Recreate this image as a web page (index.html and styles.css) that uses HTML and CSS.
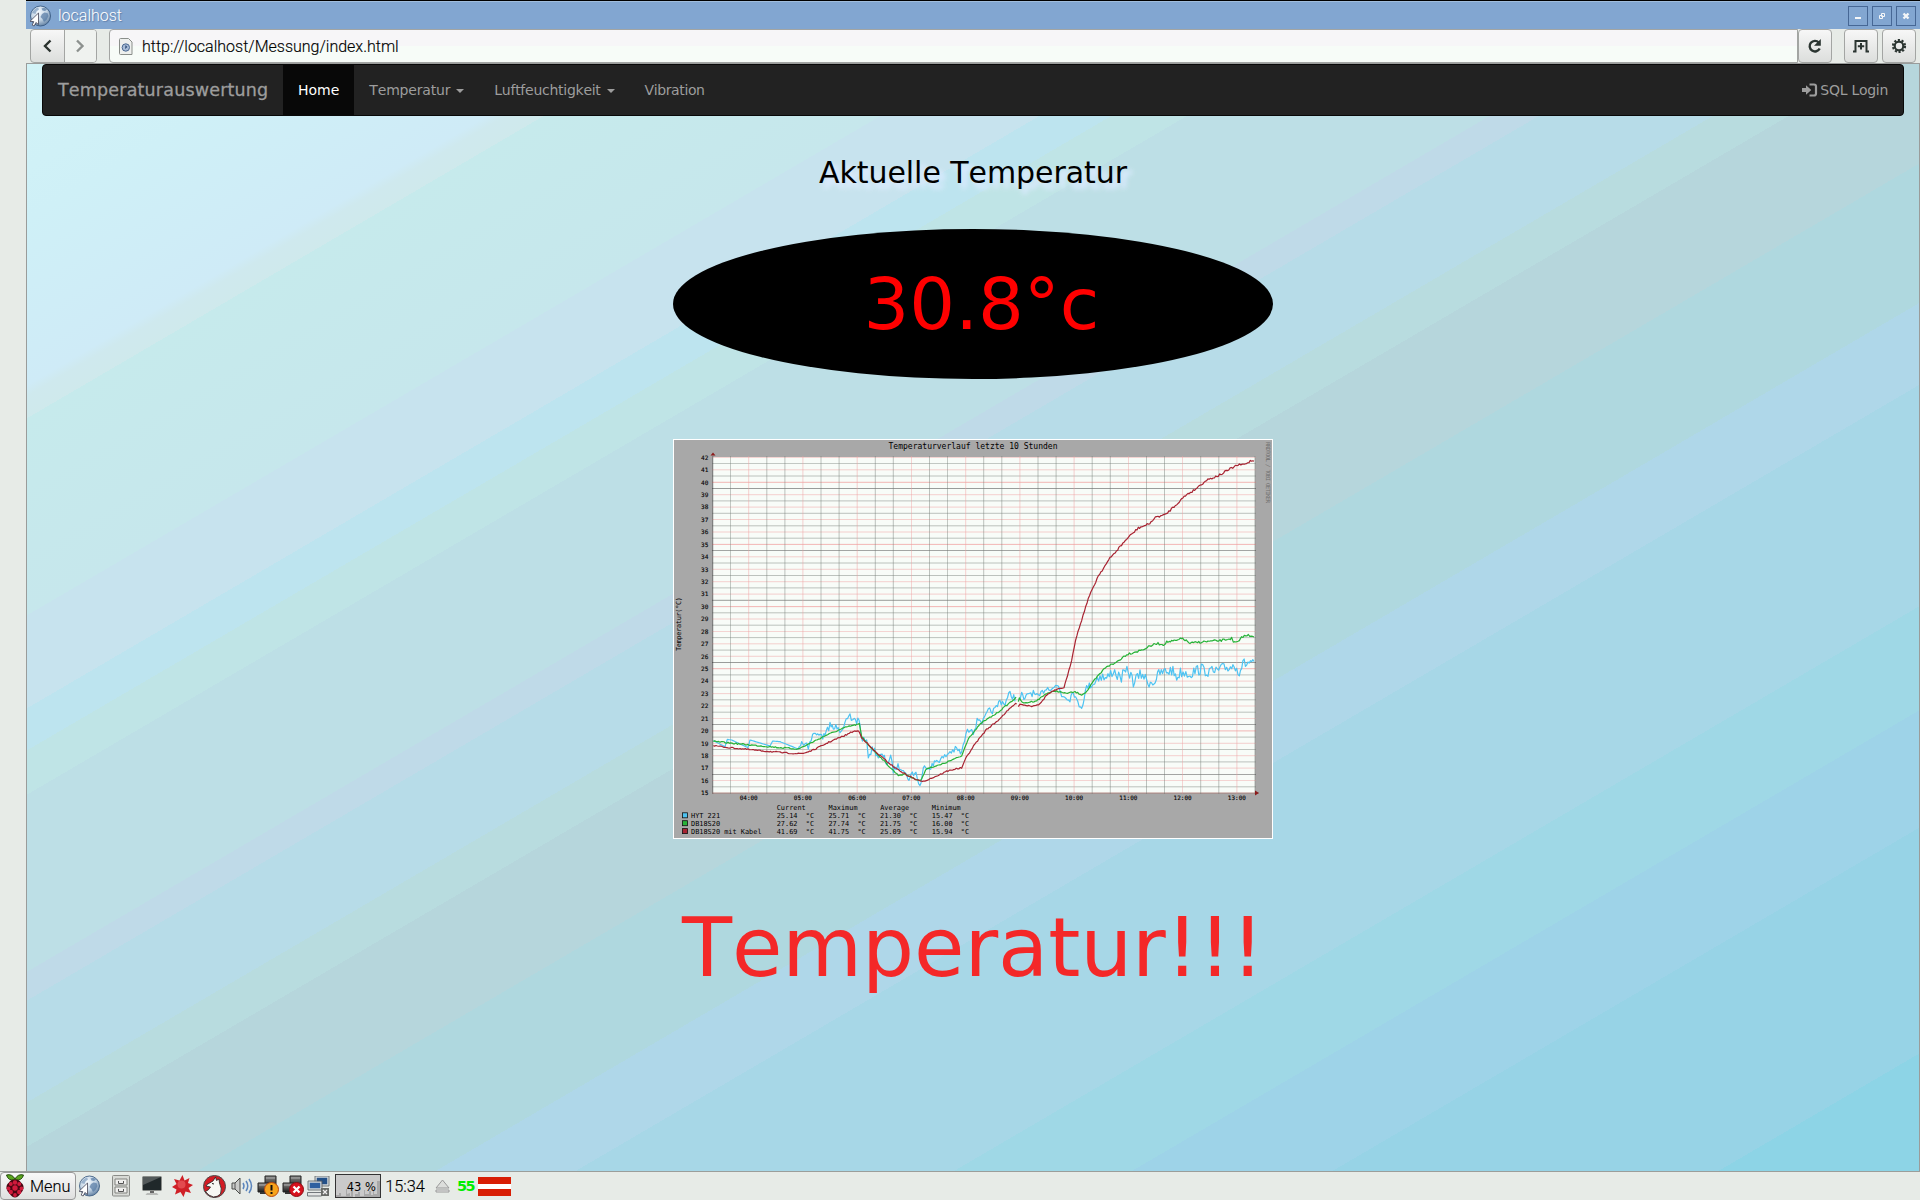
FILE: index.html
```html
<!DOCTYPE html>
<html lang="de">
<head>
<meta charset="utf-8">
<title>localhost</title>
<link rel="stylesheet" href="styles.css">
</head>
<body>
<svg class="defs" width="0" height="0">
  <defs>
    <radialGradient id="ball" cx=".4" cy=".3" r=".8"><stop offset="0" stop-color="#f4f9fd"/><stop offset=".5" stop-color="#c4d5e5"/><stop offset="1" stop-color="#4a6c92"/></radialGradient>
    <linearGradient id="metal" x2="0" y2="1"><stop offset="0" stop-color="#8a8a88"/><stop offset="1" stop-color="#1c1c1c"/></linearGradient>
    <symbol id="globe" viewBox="0 0 22 22">
      <circle cx="11.500" cy="11" r="10" fill="url(#ball)" stroke="#2f5078" stroke-width=".8"/>
      <path d="M12.500 3.500l3-1 2.500 2-2 1.500-2.500-.5zM13 9l2.500-1.500 3 .5 1 3-2 4-2.500 2-1.500-3-2-2z" fill="#49709c" opacity=".65"/>
      <path d="M3 8q2-4.500 6-5.500l1 2-2.500 2-1 2.500z" fill="#6f91b6" opacity=".6"/>
      <path d="M9.500 8v11.500l-2.600-2-1.700 3.500-2-.9 1.600-3.500-3.800-.3z" fill="#fff" stroke="#445" stroke-width=".8"/>
    </symbol>
    <symbol id="cards" viewBox="0 0 22 22">
      <path d="M8 1h11v11H8z" fill="url(#metal)" stroke="#222"/><path d="M1 8h11v9H1z" fill="url(#metal)" stroke="#222"/>
      <path d="M9 3h9M2 10h9" stroke="#aaa"/><path d="M3 18h9M12 13h6" stroke="#333" stroke-width="2"/>
    </symbol>
  </defs>
</svg>
<div class="desktop">
  <main class="window">
    <header class="titlebar">
      <svg class="title-icon"><use href="#globe"/></svg>
      <span class="title">localhost</span>
      <div class="win-buttons">
        <svg viewBox="0 0 18 18"><path d="M6 10h6v2H6z" fill="#f4f6f8"/></svg>
        <svg viewBox="0 0 18 18"><path d="M8.500 6.500h3v3h-3zM6.500 8.500h3v3h-3z" fill="none" stroke="#f4f6f8"/></svg>
        <svg viewBox="0 0 18 18"><path d="M6.500 6.500l5 5M11.500 6.500l-5 5" stroke="#f4f6f8" stroke-width="2.400"/></svg>
      </div>
    </header>
    <div class="toolbar">
      <div class="nav-pair">
        <svg viewBox="0 0 33 32"><path d="M19.500 10.500l-5.500 5.500 5.500 5.500" fill="none" stroke="#2b332f" stroke-width="2.400"/></svg>
        <svg class="off" viewBox="0 0 31 32"><path d="M12 10.500l5.500 5.500-5.500 5.500" fill="none" stroke="#8c918e" stroke-width="2.400"/></svg>
      </div>
      <div class="address">
        <svg width="14" height="17" viewBox="0 0 14 17"><path d="M1.500.5h8l3.500 3.500v12.500H1.500q-1 0-1-1v-14q0-1 1-1z" fill="#eef0ee" stroke="#8a8e8a"/><circle cx="6.800" cy="9.500" r="3.700" fill="#a9bdd8" stroke="#4a6890"/><path d="M6.500 7l2 2-2.500 2z" fill="#36547e"/></svg>
        <span>http://localhost/Messung/index.html</span>
      </div>
      <svg class="tool" viewBox="0 0 32 32"><path d="M19.800 12.500a5.300 5.300 0 1 0 .9 6" fill="none" stroke="#2b3531" stroke-width="2.400"/><path d="M21.800 9v6.800H15z" fill="#2b3531"/></svg>
      <svg class="tool tab" viewBox="0 0 32 32"><path d="M8 21.500h2.500V11h11v10.500H24" fill="none" stroke="#2b3531" stroke-width="2"/><path d="M16 13v6.500M12.800 16.200h6.400" stroke="#2b3531" stroke-width="2"/></svg>
      <svg class="tool gear" viewBox="0 0 32 32"><circle cx="16" cy="16" r="4.300" fill="none" stroke="#2b3531" stroke-width="2.200"/><circle cx="16" cy="16" r="6" fill="none" stroke="#2b3531" stroke-width="2.200" stroke-dasharray="2.100 1.670"/></svg>
    </div>
    <section class="page">
      <nav class="navbar">
        <a class="brand">Temperaturauswertung</a>
        <a class="item active">Home</a>
        <a class="item temperature">Temperatur<i class="caret"></i></a>
        <a class="item humidity">Luftfeuchtigkeit<i class="caret"></i></a>
        <a class="item vibration">Vibration</a>
        <a class="item login"><svg width="16" height="14" viewBox="0 0 16 14"><path d="M0 5h4V2.200L9.300 7 4 11.800V9H0z" fill="#9d9d9d"/><path d="M7.500 1.500H12q2 0 2 2v7q0 2-2 2H7.500" fill="none" stroke="#9d9d9d" stroke-width="2.200"/></svg>SQL Login</a>
      </nav>
      <h1>Aktuelle Temperatur</h1>
      <div class="reading">30.8°c</div>
      <svg class="chart" id="chart" viewBox="0 0 600 400"></svg>
      <p class="alarm">Temperatur!!!</p>
    </section>
  </main>
  <footer class="taskbar">
    <div class="menu">
      <svg width="20" height="24" viewBox="0 0 20 24"><path d="M10 6Q3 7 1.500 1 7-.5 10 5q3-5.500 8.500-4Q17 7 10 6z" fill="#5aa51e" stroke="#234a0c"/><path d="M10 5.500q4-.5 6 3 3 2 2.500 6-.5 3-3 5Q13 23.500 10 23.500T4.500 19.500q-2.500-2-3-5-.5-4 2.500-6 2-3.500 6-3z" fill="#4a0612"/><g fill="#d01a3c"><circle cx="10" cy="8.500" r="2.200"/><circle cx="5.800" cy="10" r="2"/><circle cx="14.200" cy="10" r="2"/><circle cx="10" cy="14" r="2.700"/><circle cx="3.500" cy="14.500" r="1.900"/><circle cx="16.500" cy="14.500" r="1.900"/><circle cx="5.800" cy="18" r="2.200"/><circle cx="14.200" cy="18" r="2.200"/><circle cx="10" cy="21" r="1.900"/></g></svg>
      <span>Menu</span>
    </div>
    <svg width="22" height="22"><use href="#globe"/></svg>
    <svg width="18" height="22" viewBox="0 0 18 22"><rect x=".5" y=".5" width="17" height="20.500" rx="1" fill="#d8dad6" stroke="#8a8c88"/><path d="M3 4h12v6H3zM3 12h12v6H3z" fill="#efefed" stroke="#81837f"/><path d="M6.500 6v2.500h5V6M6.500 14v2.500h5V14" fill="none" stroke="#555"/></svg>
    <svg width="20" height="20" viewBox="0 0 20 20"><rect x=".5" y=".5" width="19" height="14" rx="1" fill="#20282a" stroke="#8a8d8a"/><path d="M1 1h18L1 9z" fill="#53595a"/><path d="M8 15h4v2H8z" fill="#666"/><path d="M5 17h10l1.500 2h-13z" fill="#b8bab8"/></svg>
    <svg width="21" height="22" viewBox="0 0 21 22"><path d="M10.500 0l2 5.500 5-2.500-1.500 5 5 2-4.500 3 2.500 5-5.500-1.500-2 5.500-3-5L3 19.500l1.500-5L0 12l4.500-3L2 4l5.500 1.500z" fill="#cf2027"/><circle cx="9.500" cy="9.500" r="4" fill="#f0686a" opacity=".6"/></svg>
    <svg width="23" height="23" viewBox="0 0 23 23"><circle cx="11.500" cy="11.500" r="11" fill="#d31c24" stroke="#4b4b4b"/><path d="M2.500 16.500Q6 15 7.500 12L3 11l1-1.500 6-3.500L12.500 2l1 3.500L16 4l.5 4q3 6 1 11-3 3-7 3-5-1-8-5.500z" fill="#f7f7f4" stroke="#222" stroke-width=".8"/><path d="M9 8.500l2 .5" stroke="#222"/></svg>
    <svg width="22" height="20" viewBox="0 0 22 20"><path d="M1 7h3l5-5v16l-5-5H1z" fill="#c9cbc9" stroke="#4a4c4a"/><path d="M4 7v6" stroke="#555"/><g fill="none" stroke="#5c86bd" stroke-width="1.500"><path d="M12 7q2 3 0 6"/><path d="M15 5q3.500 5 0 10"/><path d="M18 3q5 7 0 14"/></g></svg>
    <svg width="22" height="22" viewBox="0 0 22 22"><use href="#cards"/><circle cx="14.500" cy="14.500" r="7" fill="#f6a31c" stroke="#b9480e"/><path d="M14.500 10v5.500M14.500 17v2" stroke="#111" stroke-width="2"/></svg>
    <svg width="22" height="22" viewBox="0 0 22 22"><use href="#cards"/><circle cx="14.500" cy="14.500" r="7" fill="#d8121d" stroke="#8c0c12"/><path d="M11.500 11.500l6 6M17.500 11.500l-6 6" stroke="#fff" stroke-width="2.300"/></svg>
    <svg class="hosts" width="23" height="21" viewBox="0 0 23 21"><path d="M9 1h12v8H9z" fill="#235088" stroke="#d4d8da" stroke-width="1.500"/><path d="M8 0h14v10H8z" fill="none" stroke="#555b60" stroke-width=".8"/><path d="M2 6h12v7H2z" fill="#2f60a0" stroke="#d4d8da" stroke-width="1.500"/><path d="M1 5h14v9H1z" fill="none" stroke="#555b60" stroke-width=".8"/><path d="M.5 16.500h14v3.500H.5z" fill="#e3e5e3" stroke="#555b60" stroke-width=".8"/><path d="M14 12h8v8h-8z" fill="#686b68"/><path d="M16 14l4 4M20 14l-4 4" stroke="#eee" stroke-width="1.300"/></svg>
    <div class="cpu">
      <svg viewBox="0 0 44 22"><path d="M0 22v-2h3v-2h2v3h5v-7h1v5l3-1v3h1v-5h2v6h2v-3h3v-2h2v4h4v-6h1v4h4v-3h2v4h2v-5h1v4h3V6h3v16z" fill="#a8a8a8"/></svg>
      <span>43 %</span>
    </div>
    <span class="clock">15:34</span>
    <svg class="eject" width="15" height="14" viewBox="0 0 15 14"><path d="M7.500 1L14 9H1z" fill="#dcdedb" stroke="#999"/><path d="M1 11h13v2H1z" fill="#eee" stroke="#999"/></svg>
    <span class="temp">55</span>
    <span class="flag"></span>
  </footer>
</div>
<script src="chart.js"></script>
</body>
</html>
```
FILE: styles.css
```css
* { box-sizing: border-box; }
body { margin: 0; background: #e7ebe7; font-family: "DejaVu Sans", sans-serif; font-kerning: none; overflow: hidden; }
.defs { display: block; }
.desktop { display: flex; flex-direction: column; height: 1200px; }
.window { margin-left: 26px; height: 1171px; flex: none; display: flex; flex-direction: column; border-top: 1px solid #000; }

.titlebar { height: 28px; flex: none; display: flex; align-items: center; padding: 0 4px 0 3px; background: #82a6d1; border-top: 1px solid #a0bddd; }
.title-icon { width: 22px; height: 22px; }
.title { margin: 0 auto 0 7px; font: 300 16px Roboto, sans-serif; color: #fff; text-shadow: 1px 1px 1px #607fa8; }
.win-buttons { display: flex; gap: 4px; }
.win-buttons svg { width: 20px; height: 20px; border: 1px solid #466795; }

.toolbar { height: 34px; flex: none; display: flex; padding: 0 4px; background: #e7ebe7; }
.nav-pair { display: flex; width: 67px; border: 1px solid #a3a5a3; border-radius: 4px; background: linear-gradient(#f7f7f7, #dcdedc); }
.nav-pair svg { width: 33px; height: 32px; }
.nav-pair .off { width: 32px; background: #eff2ef; border-left: 1px solid #a3a5a3; border-radius: 0 3px 3px 0; }
.address { flex: 1; display: flex; align-items: center; gap: 9px; margin-left: 12px; padding-left: 9px; border: 1px solid #a3a5a3; border-radius: 4px 0 0 4px; background: linear-gradient(#f7f6f8 50%, #f7fcf8 50%); font: 300 16px Roboto, sans-serif; color: #000; }
.address span { -webkit-text-stroke: .15px #000; }
.tool { width: 34px; height: 34px; border: 1px solid #a3a5a3; border-radius: 4px; background: linear-gradient(#f7f7f7, #dcdedc); }
.tab { margin-left: 12px; }
.gear { margin-left: 4px; }

.page {
  flex: 1; min-height: 0; display: flex; flex-direction: column; align-items: center;
  border: 1px solid #9a9c9b; border-bottom: 0; padding: 0 15px;
  background: linear-gradient(to bottom right,
    #d2f3f7 0, #cff0f7 7%, #cfebf7 14.500%, #cfe9ee 15%, #cfe9ec 16%,
    #c6eaec 16%, #c6e7ec 24.900%, #c7e3ee 24.900%, #c7e3ee 29.100%, #bde4ef 29.100%, #bde4ef 31%,
    #bfe4e6 31%, #bfe4e6 33%, #bddfe6 33%, #bddfe6 41%, #bfdae8 41%, #bfdae8 42.300%,
    #b7dce8 42.300%, #b7dce8 46.900%, #b8dcdf 46.900%, #b8dcdf 48.900%, #b6d6dc 48.900%, #b6d6dc 54.500%,
    #afd8df 54.500%, #afd8df 60.800%, #afd7e9 60.800%, #afd7e9 64.500%, #a7d7e7 64.500%, #a7d7e7 74.500%,
    #9fd8e6 74.500%, #9fd8e6 79.200%, #9ed3e8 79.200%, #9ed3e8 84.500%, #97d3e6 84.500%, #97d3e6 94.700%, #8dd4e6 94.700%);
}
.navbar { align-self: stretch; flex: none; display: flex; height: 52px; background: #222; border: 1px solid #080808; border-radius: 4px; color: #9d9d9d; font-size: 14px; line-height: 50px; }
.brand { padding: 0 15px; font-size: 17.500px; letter-spacing: .18px; -webkit-text-stroke: .3px #9d9d9d; width: 240px; white-space: nowrap; }
.item { padding: 0 15px; }
.active { background: #080808; color: #fff; }
.temperature { letter-spacing: -.18px; }
.humidity { letter-spacing: -.26px; }
.vibration { letter-spacing: -.4px; }
.caret { display: inline-block; margin-left: 6px; vertical-align: middle; border: 4px solid transparent; border-top-color: #9d9d9d; border-bottom: 0; }
.login { margin-left: auto; white-space: nowrap; letter-spacing: -.28px; }
.login svg { vertical-align: -2px; margin-right: 2px; }

h1 { margin: 39px 0 0; font-weight: 400; font-size: 30px; letter-spacing: -.06px; line-height: 35px; color: #000; text-shadow: 5px 5px 5px #dcebff, 4px 5px 6px #dcebff; }
.reading { width: 600px; height: 150px; flex: none; margin-top: 39px; padding-left: 17px; border-radius: 50%; background: #000; color: #f00; font-size: 72px; line-height: 150px; text-align: center; }
.chart { width: 600px; height: 400px; flex: none; margin-top: 60px; font-family: "DejaVu Sans Mono", monospace; }
.alarm { margin: 61px 0 0; font-size: 82px; letter-spacing: -.1px; line-height: 95px; color: #f42828; }

.chart .frame { fill: #a8a8a8; stroke: #fff; }
.chart .plot { fill: #f8fcf8; }
.chart .half { stroke: #707872; stroke-width: .8; opacity: .55; }
.chart .strong { stroke: #333; stroke-width: .8; opacity: .6; }
.chart .whole { stroke: #f0a0a0; stroke-width: .8; opacity: .6; }
.chart .five { stroke: #ee7c7c; stroke-width: .9; opacity: .6; }
.chart .line { fill: none; stroke-width: 3.600; stroke-linejoin: round; }
.chart .blue { stroke: #4dc3f2; }
.chart .green { stroke: #27b237; }
.chart .red { stroke: #a82432; }
.chart .heading { font-size: 8px; }
.chart .tick { font-size: 6px; stroke: #000; stroke-width: .1px; }
.chart .key { font-size: 6.900px; white-space: pre; }
.chart .mark { font-size: 5.800px; fill: #707070; }

.taskbar { height: 29px; flex: none; display: grid; grid-template-columns: 76px 26px 38px 24px 36px 28px 28px 23px 28px 28px 46px 48px 26px 21px 36px; align-items: center; justify-items: center; border-top: 1px solid #9b9e9b; background: #e7ebe7; }
.menu { width: 76px; height: 28px; display: flex; align-items: center; gap: 5px; padding-left: 4px; border: 1px solid #999; border-radius: 4px; background: linear-gradient(#f8f8f8, #dfe0df); font: 300 16.300px Roboto, sans-serif; }
.menu span, .clock { -webkit-text-stroke: .15px #000; }
.hosts { margin-right: 5px; }
.cpu { position: relative; width: 46px; height: 24px; border: 1px solid #333; background: #cacaca; }
.cpu svg { display: block; width: 44px; height: 22px; }
.cpu span { position: absolute; right: 4px; top: 5px; font-size: 11.500px; line-height: 14px; white-space: pre; }
.clock { font: 300 16.300px Roboto, sans-serif; }
.temp { font-size: 14.500px; font-weight: bold; color: #0e0; letter-spacing: -1.500px; }
.flag { width: 33px; height: 19px; background: linear-gradient(#d81e05 7px, #fff 7px 12px, #d81e05 12px); }
```
FILE: chart.js
```js
const chart = document.getElementById('chart');
const out = [];
const hline = (c, x1, y1, x2, y2) => out.push(`<line class="${c}" x1="${x1}" y1="${y1}" x2="${x2}" y2="${y2}"/>`);
const text = (c, x, y, s, extra = '') => out.push(`<text class="${c}" x="${x}" y="${y}" ${extra}>${s}</text>`);

out.push('<rect class="frame" x=".5" y=".5" width="599" height="399"/>');
out.push('<rect class="plot" x="40" y="18" width="542" height="336"/>');

// temperature grid, 15 to 42 degrees in half steps
const yOf = v => 354 - (v - 15) * 12.43;
const strong = [39.5, 34.5, 30.5, 25.5, 20.5, 16.5];
for (let v = 15; v <= 42; v += 0.5) {
  const y = yOf(v).toFixed(1);
  if (v % 1) hline(strong.includes(v) ? 'strong' : 'half', 39, y, 583, y);
  else {
    hline(v % 5 ? 'whole' : 'five', 39, y, 583, y);
    text('tick', 35.5, +y + 2.3, v, 'text-anchor="end" textLength="7.400" lengthAdjust="spacingAndGlyphs"');
  }
}

// time grid, every 20 minutes
for (let i = -1; i <= 29; i++) {
  const x = (75.7 + i * 18.08).toFixed(1);
  if (x > 583) break;
  hline(i % 3 ? 'half' : 'whole', x, 17, x, 355);
  if (i % 3 === 0) text('tick', x, 361.3, String(4 + i / 3).padStart(2, '0') + ':00', 'text-anchor="middle"');
}
hline('strong', 39.8, 17, 39.8, 355);
hline('half', 39, 354, 586, 354);

const curves = {
  blue: ['160,332 195,350 202,328 215,330 264,353 270,330 330,348 338,333 360,335 415,357 425,332 432,346 440,335 445,348 462,308 470,318 480,305 485,322 495,318 510,283 520,298 535,285 540,300 570,262 578,275 583,260 590,278 597,262 603,320 620,340 625,375 640,355 655,380 670,378 680,400 692,385 700,420 710,410 730,412 740,440 750,445 757,428 768,430 780,470 790,420 797,403 805,412 820,405 830,390 850,385 870,365 890,358 905,370 918,312 935,290 940,305 955,265 970,275 985,245 1005,240 1020,212 1035,220 1050,190 1065,205',
    '1078,210 1085,195 1095,212 1105,188 1120,190 1135,205 1155,175 1195,168 1205,195 1230,205 1240,180 1250,215 1265,230 1280,172 1300,160 1320,135 1340,148 1360,120 1380,145 1405,122 1420,155 1448,130 1460,155 1482,155 1500,130 1535,120 1550,140 1565,125 1590,130 1620,117 1660,127 1700,113 1730,105 1738,130 1745,105 1775,95 1782,110'],
  green: ['160,334 240,342 350,352 415,357 440,345 500,315 560,291 598,282 605,320 630,350 660,380 690,412 715,436 735,432 760,445 782,452 800,415 840,405 905,378 925,325 965,278 1010,250 1068,203',
    '1075,215 1078,205 1090,220 1130,212 1160,190 1190,183 1215,190 1245,186 1265,194 1280,185 1300,155 1340,108 1360,103 1400,73 1445,60 1490,40 1510,44 1520,36 1550,32 1568,25 1590,40 1620,36 1680,32 1715,25 1720,38 1738,35 1745,20 1765,16 1782,18'],
  red: ['160,347 200,352 300,362 380,369 415,371 430,370 460,360 510,335 560,314 580,304 596,303 605,322 640,360 700,410 740,435 780,454 795,452 830,438 860,424 885,417 905,414 920,380 945,342 980,298 1010,275 1040,245 1060,226 1070,220',
    '1075,230 1080,221 1090,225 1115,228 1140,222 1160,195 1180,183 1212,172 1222,140 1235,90 1247,28 1265,-30 1285,-95 1315,-163 1350,-215 1400,-273 1435,-306 1465,-317 1490,-340 1515,-345 1550,-378 1580,-407 1600,-418 1640,-450 1675,-463 1730,-494 1755,-497 1775,-509 1782,-506']
};
let seed = 7;
const rnd = () => (seed = (seed * 16807) % 2147483647) / 2147483647 - 0.5;
const jitter = (pts, amount, from) => {
  const p = pts.split(' ').map(s => s.split(',').map(Number));
  const r = [p[0]];
  for (let i = 1; i < p.length; i++) {
    const [a, b] = p[i - 1], [c, d] = p[i];
    const n = Math.max(1, Math.round((c - a) / 4));
    for (let k = 1; k <= n; k++) {
      const x = a + (c - a) * k / n;
      const amp = x < from ? 0 : amount * (x > 1300 ? 1.7 : 1);
      r.push([x, b + (d - b) * k / n + rnd() * amp]);
    }
  }
  return r.map(q => q.map(n => n.toFixed(1)).join()).join(' ');
};
out.push('<g transform="scale(.33333) translate(-39 573)">');
for (const name in curves)
  for (const part of curves[name])
    out.push(`<polyline class="line ${name}" points="${jitter(part, name === 'blue' ? 21 : 4, name === 'blue' ? 420 : 1)}"/>`);
out.push('</g>');

out.push('<path d="M37.500 16.500h5L40 13.500zM582 351.500v5l4-2.500z" fill="#8c1c1c"/>');
text('heading', 300, 9.6, 'Temperaturverlauf letzte 10 Stunden', 'text-anchor="middle" textLength="169" lengthAdjust="spacingAndGlyphs"');
text('key', 0, 0, 'Temperatur(°C)', 'transform="translate(7.500 212) rotate(-90)" textLength="54"');
text('mark', 0, 0, 'RRDTOOL / TOBI OETIKER', 'transform="translate(592.500 3) rotate(90)" textLength="61"');

[['Current', 103.7], ['Maximum', 155.5], ['Average', 207.2], ['Minimum', 258.7]]
  .forEach(([s, x]) => text('key', x, 371, s));
[['HYT 221', '#4dc3f2', '25.14', '25.71', '21.30', '15.47'],
 ['DB18S20', '#27b237', '27.62', '27.74', '21.75', '16.00'],
 ['DB18S20 mit Kabel', '#a82432', '41.69', '41.75', '25.09', '15.94']]
  .forEach(([name, color, ...vals], i) => {
    const y = 378.8 + i * 7.9;
    out.push(`<rect x="9.500" y="${y - 5}" width="5" height="5" fill="${color}" stroke="#111" stroke-width=".8"/>`);
    text('key', 18, y, name);
    vals.forEach((v, k) => text('key', 103.7 + k * 51.7, y, v + '  °C'));
  });
chart.innerHTML = out.join('');
```
